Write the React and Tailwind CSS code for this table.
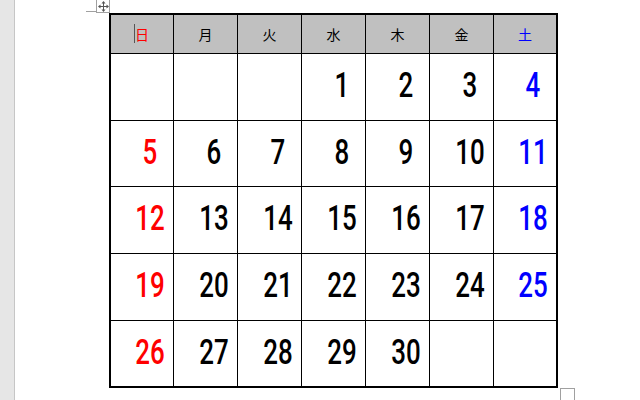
const weeks = [
  [null, null, null, 1, 2, 3, 4],
  [5, 6, 7, 8, 9, 10, 11],
  [12, 13, 14, 15, 16, 17, 18],
  [19, 20, 21, 22, 23, 24, 25],
  [26, 27, 28, 29, 30, null, null],
]

const days = ['日', '月', '火', '水', '木', '金', '土']

const colorFor = (i) =>
  i === 0 ? 'text-[#ff0000]' : i === 6 ? 'text-[#0000ff]' : 'text-black'

function MoveHandle() {
  return (
    <div className="absolute left-[96px] top-0 w-[14px] h-[13px] border border-[#a0a0a0] border-t-0 bg-white flex items-center justify-center">
      <svg width="11" height="11" viewBox="0 0 11 11" fill="#555">
        <rect x="5" y="2" width="1" height="7" />
        <rect x="2" y="5" width="7" height="1" />
        <path d="M5.5 0 L3.5 2.5 H7.5 Z" />
        <path d="M5.5 11 L3.5 8.5 H7.5 Z" />
        <path d="M0 5.5 L2.5 3.5 V7.5 Z" />
        <path d="M11 5.5 L8.5 3.5 V7.5 Z" />
      </svg>
    </div>
  )
}

export default function App() {
  return (
    <div className="relative w-[640px] h-[400px] bg-white overflow-hidden flex">
      {/* Page margin */}
      <div className="w-[15px] h-full bg-[#e6e6e6] border-r border-[#c6c6c6]" />

      <div className="absolute left-[86px] top-[11px] w-[10px] h-px bg-[#a0a0a0]" />
      <MoveHandle />

      {/* Calendar table */}
      <div className="ml-[94px] mt-[13px] w-[449px] self-start border-2 border-black grid grid-cols-[63px_64px_64px_64px_64px_64px_62px] grid-rows-[39px_67px_66px_67px_67px_65px]">
        {days.map((d, i) => (
          <div
            key={d}
            className={`relative bg-[#c0c0c0] border-b border-black ${i < 6 ? 'border-r' : ''} flex items-center justify-center text-[14px] ${colorFor(i)}`}
            style={{ fontFamily: '"Noto Sans CJK JP", sans-serif' }}
          >
            {i === 0 && (
              <span className="absolute left-[23px] top-[9px] w-px h-[19px] bg-[#555]" />
            )}
            {d}
          </div>
        ))}
        {weeks.map((week, r) =>
          week.map((n, i) => (
            <div
              key={`${r}-${i}`}
              className={`${r < 4 ? 'border-b' : ''} ${i < 6 ? 'border-r' : ''} border-black flex items-center justify-center pl-[16px] pb-[3px] ${colorFor(i)}`}
            >
              {n && (
                <span
                  className="inline-block text-[35px] font-medium leading-none scale-x-[0.74]"
                  style={{ fontFamily: 'Roboto, "Liberation Sans", sans-serif' }}
                >
                  {n}
                </span>
              )}
            </div>
          ))
        )}
      </div>

      <div className="absolute left-[560px] top-[388px] w-[15px] h-[15px] border border-[#a0a0a0]" />
    </div>
  )
}
